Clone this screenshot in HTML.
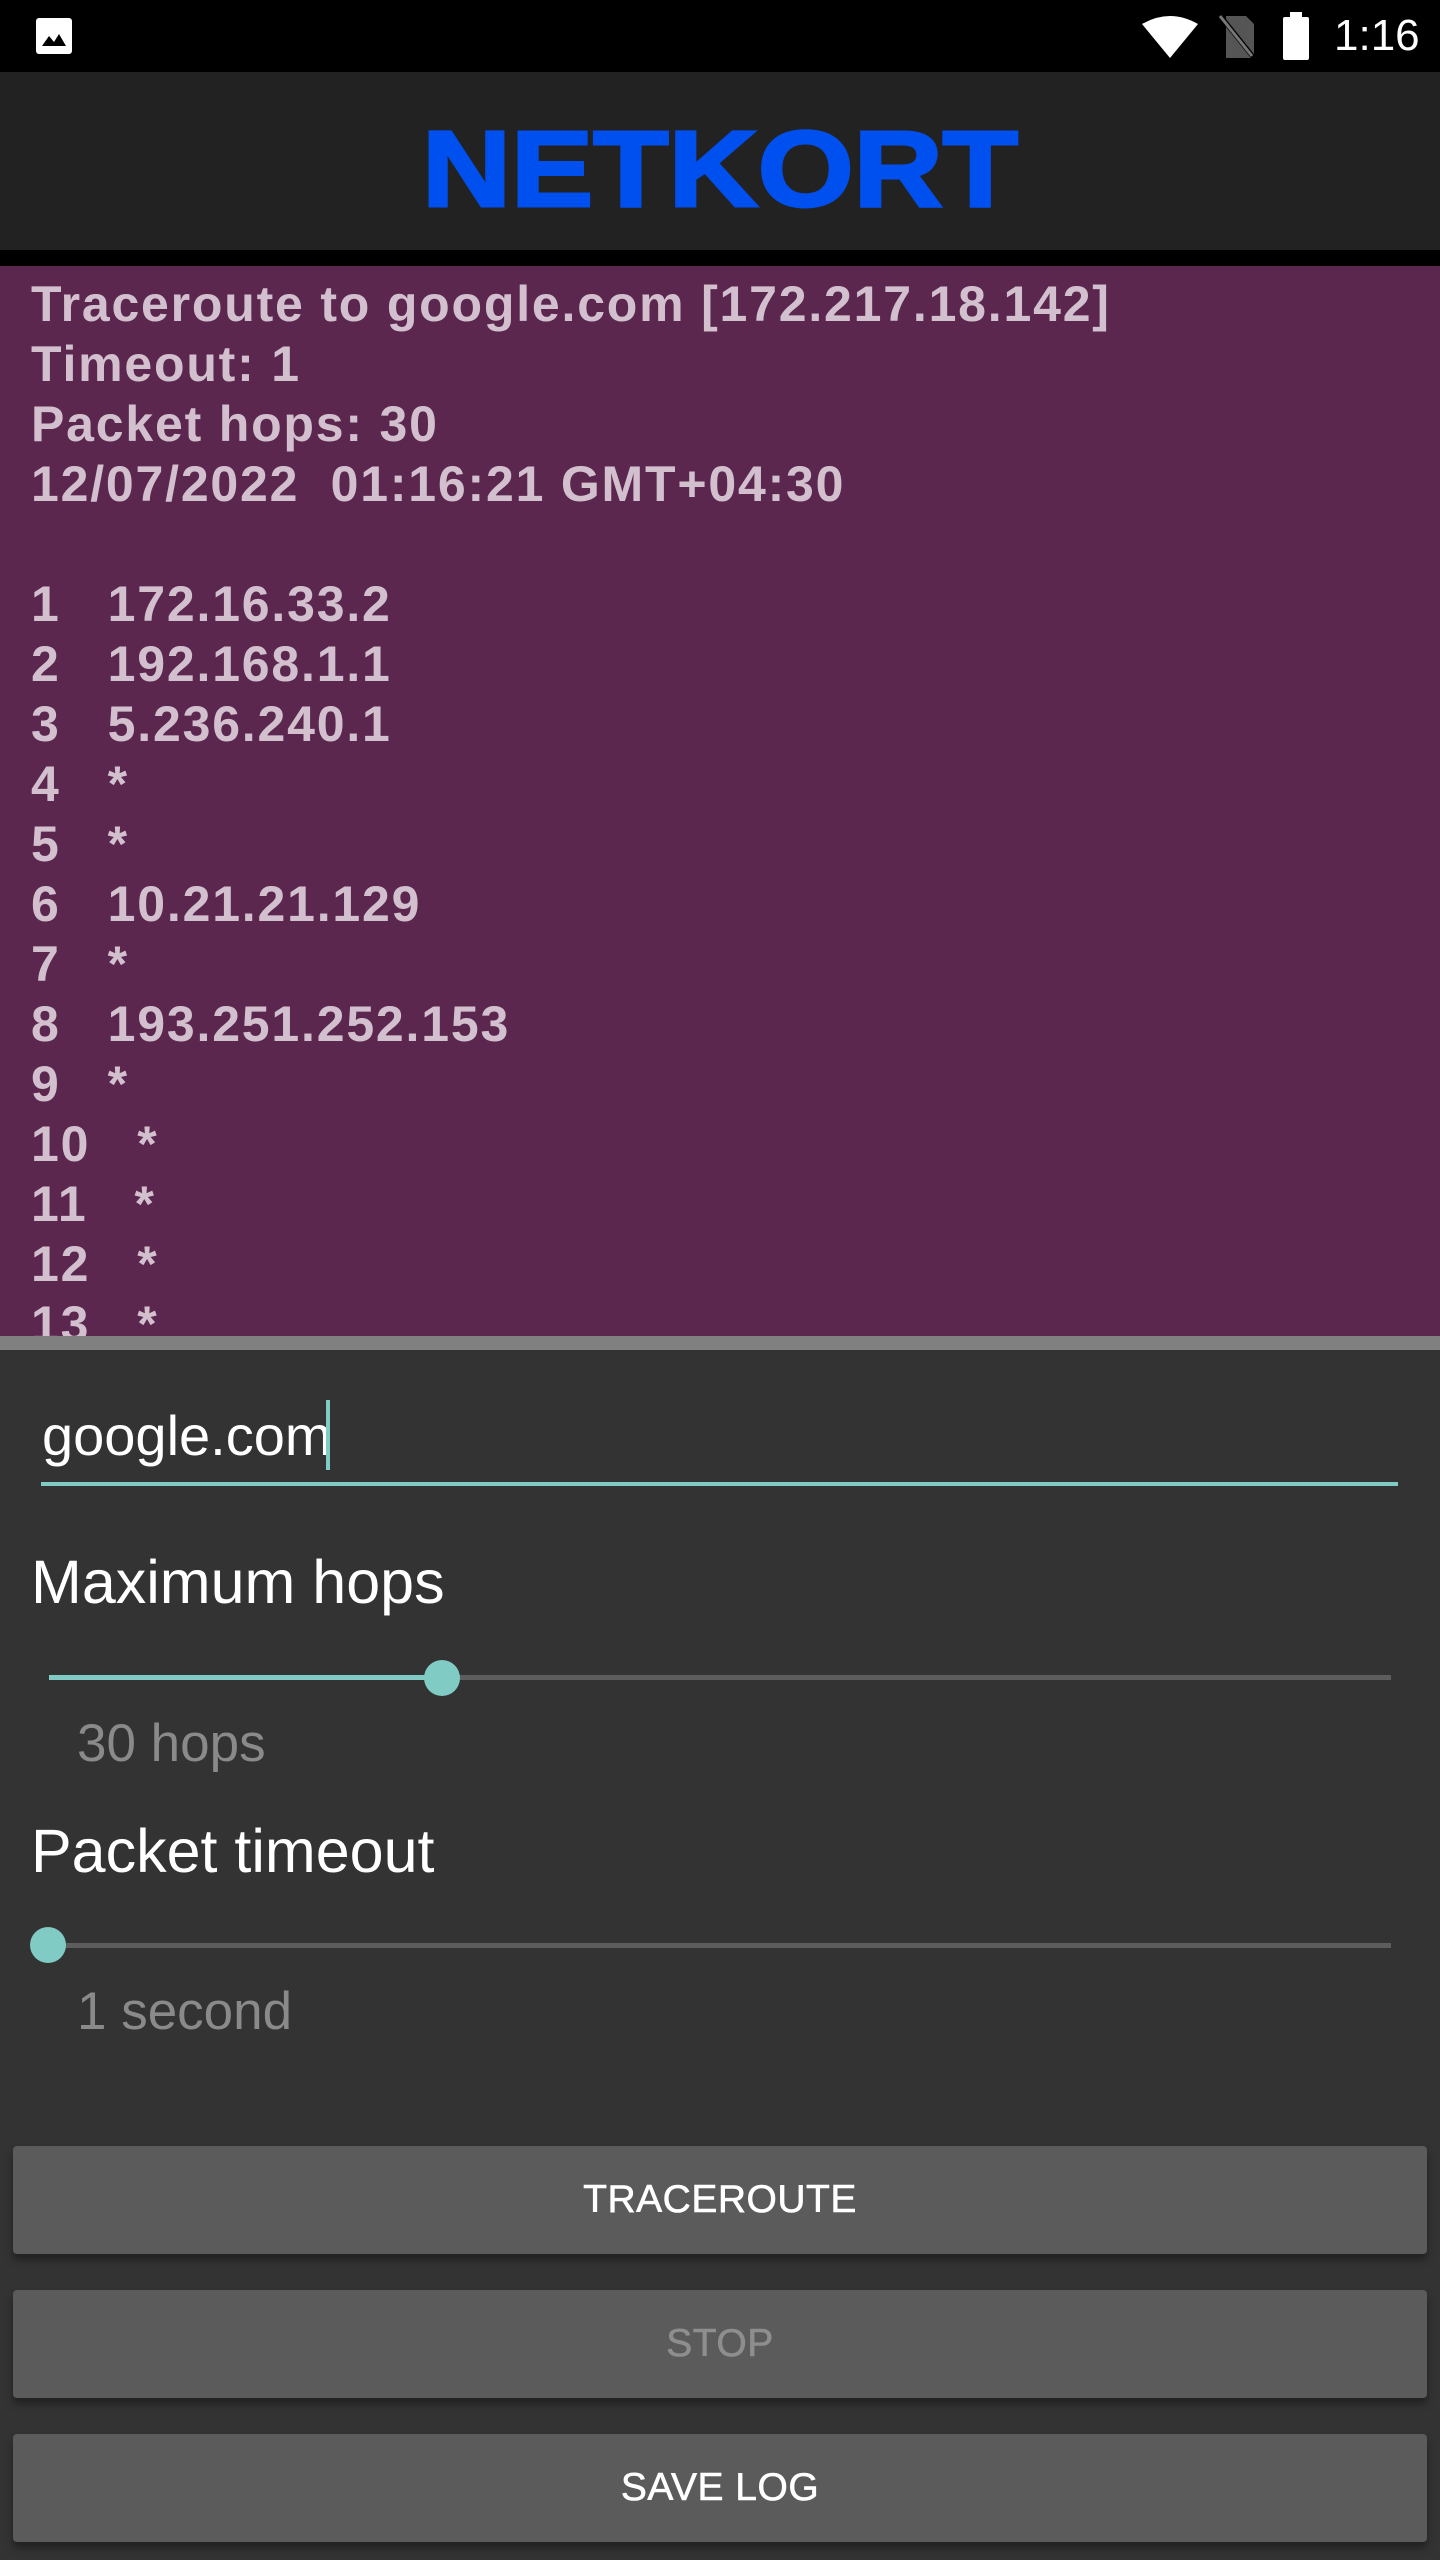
<!DOCTYPE html>
<html><head><meta charset="utf-8"><style>
*{margin:0;padding:0;box-sizing:border-box}
body{width:1440px;height:2560px;background:#333;position:relative;overflow:hidden;font-family:"Liberation Sans",sans-serif}
.a{position:absolute}
.log{position:absolute;left:31px;color:#d3c0cf;font-size:50px;line-height:60px;white-space:pre;font-weight:bold;letter-spacing:1.8px}
.lbl{position:absolute;left:31px;color:#fff;font-size:61px;line-height:60px}
.sub{position:absolute;left:77px;color:#8a8a8a;font-size:53px;line-height:60px}
.btn{position:absolute;left:13px;width:1414px;height:108px;background:#5b5b5c;border-radius:4px;box-shadow:0 6px 8px rgba(0,0,0,.35);color:#fff;font-size:39px;text-align:center;line-height:108px;letter-spacing:0.5px;-webkit-text-stroke:0.6px currentColor}
</style></head><body>
<div class="a" style="left:0;top:0;width:1440px;height:72px;background:#000"></div>
<svg class="a" style="left:34px;top:16px" width="40" height="40" viewBox="0 0 40 40"><rect x="2" y="2" width="36" height="36" rx="3" fill="#fff"/><path d="M8 30 L15 20 L20 26 L25 18 L32 30 Z" fill="#000"/></svg>
<svg class="a" style="left:1140px;top:14px" width="60" height="44" viewBox="0 0 60 44"><path d="M2 10 Q30 -6 58 10 L30 44 Z" fill="#fff"/></svg>
<svg class="a" style="left:1218px;top:14px" width="40" height="46" viewBox="0 0 40 46"><path d="M8 2 H28 L36 10 V44 H8 Z" fill="#555"/><path d="M4 4 L36 44" stroke="#000" stroke-width="5"/><path d="M2 2 L34 42" stroke="#777" stroke-width="3"/></svg>
<svg class="a" style="left:1280px;top:12px" width="32" height="48" viewBox="0 0 32 48"><rect x="10" y="0" width="12" height="6" fill="#fff"/><rect x="3" y="5" width="26" height="43" rx="2" fill="#fff"/></svg>
<div class="a" style="left:1334px;top:10px;color:#fff;font-size:44px;line-height:52px">1:16</div>
<div class="a" style="left:0;top:72px;width:1440px;height:178px;background:#222"></div>
<div class="a" style="left:0;top:250px;width:1440px;height:16px;background:#000"></div>
<svg class="a" style="left:400px;top:110px" width="640" height="120" viewBox="0 0 640 120"><text x="22" y="96" font-family="Liberation Sans" font-weight="bold" font-size="108" fill="#0050ef" stroke="#0050ef" stroke-width="3" textLength="596" lengthAdjust="spacingAndGlyphs">NETKORT</text></svg>
<div class="a" style="left:0;top:266px;width:1440px;height:1070px;background:#5c274f;overflow:hidden">
<div class="log" style="top:8px">Traceroute to google.com [172.217.18.142]
Timeout: 1
Packet hops: 30
12/07/2022  01:16:21 GMT+04:30

1   172.16.33.2
2   192.168.1.1
3   5.236.240.1
4   *
5   *
6   10.21.21.129
7   *
8   193.251.252.153
9   *
10   *
11   *
12   *
13   *</div></div>
<div class="a" style="left:0;top:1336px;width:1440px;height:14px;background:#808080"></div>
<div class="a" style="left:42px;top:1406px;color:#fff;font-size:56px;line-height:60px">google.com</div>
<div class="a" style="left:326px;top:1400px;width:4px;height:70px;background:#80cbc4"></div>
<div class="a" style="left:41px;top:1482px;width:1357px;height:4px;background:#80cbc4"></div>
<div class="lbl" style="top:1552px">Maximum hops</div>
<div class="a" style="left:49px;top:1675px;width:1342px;height:5px;background:#5d5d5d"></div>
<div class="a" style="left:49px;top:1675px;width:392px;height:5px;background:#80cbc4"></div>
<div class="a" style="left:424px;top:1660px;width:36px;height:36px;border-radius:50%;background:#80cbc4"></div>
<div class="sub" style="top:1714px">30 hops</div>
<div class="lbl" style="top:1821px">Packet timeout</div>
<div class="a" style="left:49px;top:1943px;width:1342px;height:5px;background:#5d5d5d"></div>
<div class="a" style="left:30px;top:1927px;width:36px;height:36px;border-radius:50%;background:#80cbc4"></div>
<div class="sub" style="top:1982px">1 second</div>
<div class="btn" style="top:2146px">TRACEROUTE</div>
<div class="btn" style="top:2290px;color:#8e8e8e">STOP</div>
<div class="btn" style="top:2434px">SAVE LOG</div>
</body></html>
